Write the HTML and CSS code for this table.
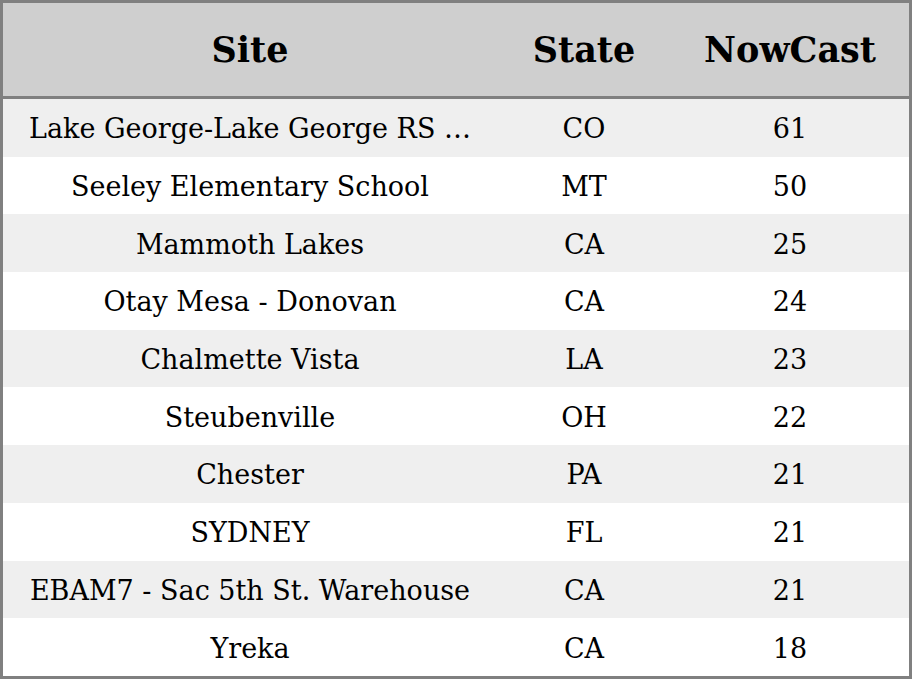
FILE: index.html
```html
<!DOCTYPE html>
<html>
<head>
<meta charset="utf-8">
<link rel="stylesheet" href="styles.css">
</head>
<body>
<table class="aq">
  <colgroup><col class="c-site"><col class="c-state"><col class="c-now"></colgroup>
  <thead>
    <tr><th>Site</th><th>State</th><th>NowCast</th></tr>
  </thead>
  <tbody>
    <tr><td>Lake George-Lake George RS …</td><td>CO</td><td>61</td></tr>
    <tr><td>Seeley Elementary School</td><td>MT</td><td>50</td></tr>
    <tr><td>Mammoth Lakes</td><td>CA</td><td>25</td></tr>
    <tr><td>Otay Mesa - Donovan</td><td>CA</td><td>24</td></tr>
    <tr><td>Chalmette Vista</td><td>LA</td><td>23</td></tr>
    <tr><td>Steubenville</td><td>OH</td><td>22</td></tr>
    <tr><td>Chester</td><td>PA</td><td>21</td></tr>
    <tr><td>SYDNEY</td><td>FL</td><td>21</td></tr>
    <tr><td>EBAM7 - Sac 5th St. Warehouse</td><td>CA</td><td>21</td></tr>
    <tr><td>Yreka</td><td>CA</td><td>18</td></tr>
  </tbody>
</table>
</body>
</html>
```
FILE: styles.css
```css
html, body { margin: 0; padding: 0; background: #ffffff; }
body { font-family: "DejaVu Serif", serif; color: #000; }
.aq {
  width: 912px;
  height: 679px;
  border: 3px solid #808080;
  border-collapse: separate;
  border-spacing: 0;
  box-sizing: border-box;
  table-layout: fixed;
}
.c-site { width: 494px; }
.c-state { width: 174px; }
.c-now { width: 238px; }
.aq th {
  background: #cfcfcf;
  height: 93px;
  padding: 0;
  font-size: 35px;
  font-weight: bold;
  text-align: center;
  border-bottom: 3px solid #808080;
}
.aq td {
  height: 57.7px;
  padding: 2px 0 0;
  box-sizing: border-box;
  font-size: 27px;
  text-align: center;
  white-space: nowrap;
}
.aq tbody tr:nth-child(odd) td { background: #efefef; }
.aq tbody tr:nth-child(even) td { background: #ffffff; }
```
